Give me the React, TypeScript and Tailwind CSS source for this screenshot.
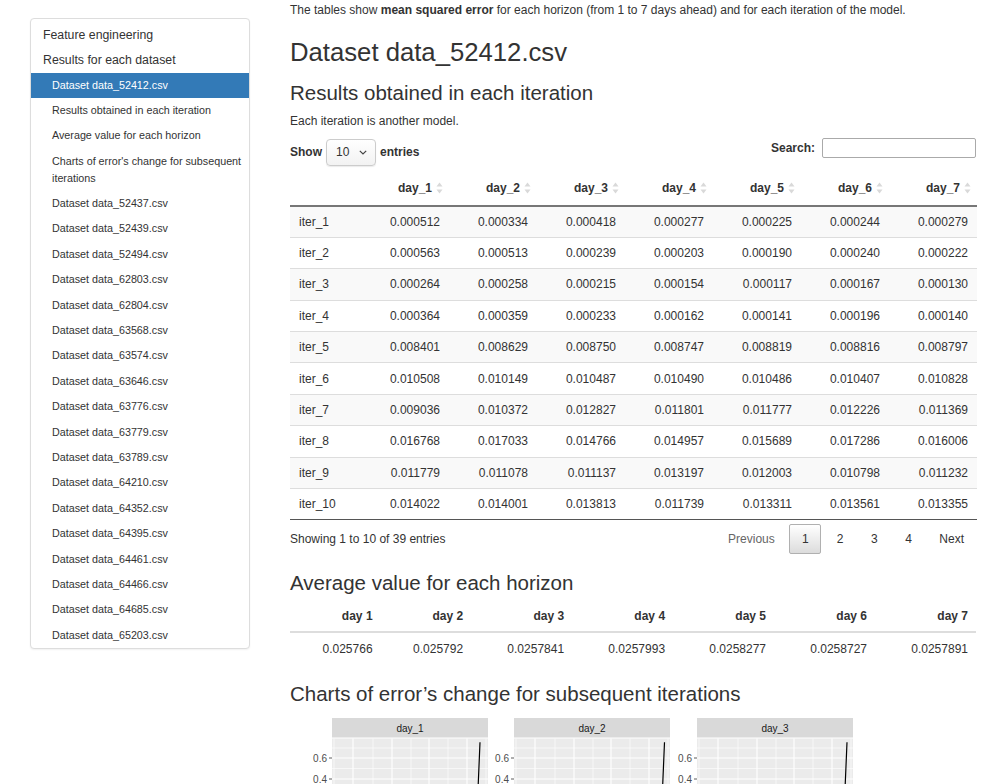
import React from 'react';

const datasets = [
  '52437', '52439', '52494', '62803', '62804', '63568', '63574', '63646', '63776',
  '63779', '63789', '64210', '64352', '64395', '64461', '64466', '64685', '65203',
];

const rows: [string, string[]][] = [
  ['iter_1', ['0.000512', '0.000334', '0.000418', '0.000277', '0.000225', '0.000244', '0.000279']],
  ['iter_2', ['0.000563', '0.000513', '0.000239', '0.000203', '0.000190', '0.000240', '0.000222']],
  ['iter_3', ['0.000264', '0.000258', '0.000215', '0.000154', '0.000117', '0.000167', '0.000130']],
  ['iter_4', ['0.000364', '0.000359', '0.000233', '0.000162', '0.000141', '0.000196', '0.000140']],
  ['iter_5', ['0.008401', '0.008629', '0.008750', '0.008747', '0.008819', '0.008816', '0.008797']],
  ['iter_6', ['0.010508', '0.010149', '0.010487', '0.010490', '0.010486', '0.010407', '0.010828']],
  ['iter_7', ['0.009036', '0.010372', '0.012827', '0.011801', '0.011777', '0.012226', '0.011369']],
  ['iter_8', ['0.016768', '0.017033', '0.014766', '0.014957', '0.015689', '0.017286', '0.016006']],
  ['iter_9', ['0.011779', '0.011078', '0.011137', '0.013197', '0.012003', '0.010798', '0.011232']],
  ['iter_10', ['0.014022', '0.014001', '0.013813', '0.011739', '0.013311', '0.013561', '0.013355']],
];

const averages = ['0.025766', '0.025792', '0.0257841', '0.0257993', '0.0258277', '0.0258727', '0.0257891'];

const days = [1, 2, 3, 4, 5, 6, 7];

const SortIcon = () => (
  <svg width="7" height="12" viewBox="0 0 7 12" className="ml-[4px] mr-[6px] shrink-0">
    <path d="M3.5 0.5 L6.5 4.5 L0.5 4.5 Z" fill="#d9d9d9" />
    <path d="M3.5 11.5 L6.5 7.5 L0.5 7.5 Z" fill="#d9d9d9" />
  </svg>
);

const Sidebar = () => (
  <div className="mt-[18px] w-[220px] shrink-0 self-start overflow-hidden rounded-[4px] border border-[#dddddd] bg-white shadow-[0_1px_2px_rgba(0,0,0,0.06)]">
    <div className="pt-[3.5px]">
      <div className="h-[25px] pl-[12px] text-[12.3px] leading-[25px] text-[#333]">Feature engineering</div>
      <div className="h-[25px] pl-[12px] text-[12.3px] leading-[25px] text-[#333]">Results for each dataset</div>
      <div className="h-[25.4px] bg-[#337ab7] pl-[21px] text-[10.75px] leading-[25.4px] text-white">
        Dataset data_52412.csv
      </div>
      <div className="h-[25.4px] pl-[21px] text-[10.75px] leading-[25.4px] text-[#333]">
        Results obtained in each iteration
      </div>
      <div className="h-[25.4px] pl-[21px] text-[10.75px] leading-[25.4px] text-[#333]">
        Average value for each horizon
      </div>
      <div className="py-[4.2px] pl-[21px] pr-[6px] text-[10.75px] leading-[17px] text-[#333]">
        Charts of error's change for subsequent iterations
      </div>
      {datasets.map((d) => (
        <div key={d} className="h-[25.4px] pl-[21px] text-[10.75px] leading-[25.4px] text-[#333]">
          Dataset data_{d}.csv
        </div>
      ))}
    </div>
  </div>
);

const ResultsTable = () => (
  <table className="mt-[7px] w-[686px] table-fixed border-collapse text-[12px] text-[#333]">
    <colgroup>
      <col className="w-[71px]" />
      {days.map((d) => (
        <col key={d} className="w-[88px]" />
      ))}
    </colgroup>
    <thead>
      <tr className="h-[33px] border-b-2 border-[#777]">
        <th className="pb-[3px]" />
        {days.map((d) => (
          <th key={d} className="pb-[3px] font-bold">
            <div className="flex items-center justify-end">
              <span>day_{d}</span>
              <SortIcon />
            </div>
          </th>
        ))}
      </tr>
    </thead>
    <tbody className="border-b border-[#555]">
      {rows.map(([name, vals], i) => (
        <tr key={name} className={`h-[31.4px] border-t border-[#dddddd] ${i % 2 === 0 ? 'bg-[#f9f9f9]' : 'bg-white'}`}>
          <td className="pl-[9px] text-left">{name}</td>
          {vals.map((v, j) => (
            <td key={j} className="pr-[9px] text-right">
              {v}
            </td>
          ))}
        </tr>
      ))}
    </tbody>
  </table>
);

const Pagination = () => (
  <div className="mt-[4px] flex h-[30px] items-center justify-between text-[12px] text-[#333]">
    <span>Showing 1 to 10 of 39 entries</span>
    <div className="flex items-center">
      <span className="px-[12px] text-[#666]">Previous</span>
      <span className="ml-[2.5px] flex h-[30px] w-[32px] items-center justify-center rounded-[2px] border border-[#b0b0b0] bg-gradient-to-b from-white to-[#dcdcdc]">
        1
      </span>
      {['2', '3', '4', 'Next'].map((p) => (
        <span key={p} className="ml-[3.5px] px-[12px]">
          {p}
        </span>
      ))}
    </div>
  </div>
);

const AvgTable = () => (
  <table className="mt-[6.5px] w-[686px] border-collapse text-[12px] text-[#333]">
    <thead>
      <tr className="h-[32px] border-b-2 border-[#dddddd]">
        {days.map((d) => (
          <th key={d} className="pr-[8px] text-right font-bold">
            day {d}
          </th>
        ))}
      </tr>
    </thead>
    <tbody>
      <tr className="h-[33px]">
        {averages.map((a) => (
          <td key={a} className="pr-[8px] text-right">
            {a}
          </td>
        ))}
      </tr>
    </tbody>
  </table>
);

const panelXs = [42, 224, 407];
const lineOffsets = [148, 150.5, 150];

const Charts = () => {
  const w = 156;
  const yFor = (v: number) => 103 - v * 105;
  return (
    <svg width="580" height="150" viewBox="0 0 580 150" className="mt-[12.5px] block">
      {panelXs.map((px, k) => {
        const vx = [2, 21, 41, 60, 79, 97, 116, 135, 154];
        const lx = px + lineOffsets[k];
        return (
          <g key={k}>
            <rect x={px} y={0} width={w} height={19.5} fill="#d9d9d9" />
            <text
              x={px + w / 2}
              y={13.5}
              textAnchor="middle"
              fontSize="10"
              fill="#1a1a1a"
              fontFamily="'Liberation Sans', Arial, sans-serif"
            >
              day_{k + 1}
            </text>
            <rect x={px} y={20.5} width={w} height={100} fill="#ebebeb" />
            {[30, 50.5, 71.5, 92.5, 113].map((y) => (
              <line key={y} x1={px} x2={px + w} y1={y} y2={y} stroke="#fff" strokeWidth="0.6" />
            ))}
            {[40, 61, 82, 103].map((y) => (
              <line key={y} x1={px} x2={px + w} y1={y} y2={y} stroke="#fff" strokeWidth="1.1" />
            ))}
            {vx.map((x, i) => (
              <line
                key={x}
                x1={px + x}
                x2={px + x}
                y1={20.5}
                y2={120.5}
                stroke="#fff"
                strokeWidth={i % 2 === 1 ? 1.1 : 0.6}
              />
            ))}
            {[0.6, 0.4, 0.2, 0.0].map((v) => (
              <g key={v}>
                <text
                  x={px - 5}
                  y={yFor(v) + 3.6}
                  textAnchor="end"
                  fontSize="10"
                  fill="#4d4d4d"
                  fontFamily="'Liberation Sans', Arial, sans-serif"
                >
                  {v.toFixed(1)}
                </text>
                <line x1={px - 3} x2={px} y1={yFor(v)} y2={yFor(v)} stroke="#333" strokeWidth="0.8" />
              </g>
            ))}
            <polyline
              points={`${px + 8},${yFor(0.001)} ${px + 40},${yFor(0.01)} ${px + 100},${yFor(0.02)} ${lx - 4},${yFor(0.03)} ${lx - 2},${yFor(0.3)} ${lx},${yFor(0.75)}`}
              fill="none"
              stroke="#000"
              strokeWidth="1.2"
            />
          </g>
        );
      })}
    </svg>
  );
};

export default function App() {
  return (
    <div className="min-h-screen bg-white font-['Liberation_Sans',Arial,sans-serif] text-[#333]">
      <div className="flex">
        <div className="ml-[30px]">
          <Sidebar />
        </div>
        <main className="ml-[40px] w-[686px] pt-[2px]">
          <p className="text-[12px] leading-[17px]">
            The tables show <b>mean squared error</b> for each horizon (from 1 to 7 days ahead) and for each
            iteration of the model.
          </p>
          <h2 className="mt-[19px] text-[25.7px] leading-[28px] font-normal">Dataset data_52412.csv</h2>
          <h3 className="mt-[15px] text-[20.5px] leading-[23px] font-normal">Results obtained in each iteration</h3>
          <p className="mt-[8.5px] text-[12px] leading-[17px]">Each iteration is another model.</p>
          <div className="mt-[8.5px] flex h-[28px] items-start justify-between text-[12px]">
            <div className="flex h-[28px] items-center font-bold">
              <span>Show</span>
              <div className="mx-[4px] flex h-[27px] w-[50px] items-center justify-between rounded-[4px] border border-[#cccccc] bg-gradient-to-b from-white to-[#f2f2f2] pl-[9px] pr-[8px] font-normal shadow-[0_1px_1px_rgba(0,0,0,0.08)]">
                <span>10</span>
                <svg width="8" height="5" viewBox="0 0 8 5">
                  <path d="M0.8 0.8 L4 4 L7.2 0.8" fill="none" stroke="#444" strokeWidth="1.2" />
                </svg>
              </div>
              <span>entries</span>
            </div>
            <div className="flex h-[20px] items-center font-bold">
              <span>Search:</span>
              <div className="ml-[7px] h-[20px] w-[154px] rounded-[2px] border border-[#aaaaaa] bg-white" />
            </div>
          </div>
          <ResultsTable />
          <Pagination />
          <h3 className="mt-[16.5px] text-[20.5px] leading-[23px] font-normal">Average value for each horizon</h3>
          <AvgTable />
          <h3 className="mt-[17px] text-[20.5px] leading-[23px] font-normal">
            Charts of error’s change for subsequent iterations
          </h3>
          <Charts />
        </main>
      </div>
    </div>
  );
}
